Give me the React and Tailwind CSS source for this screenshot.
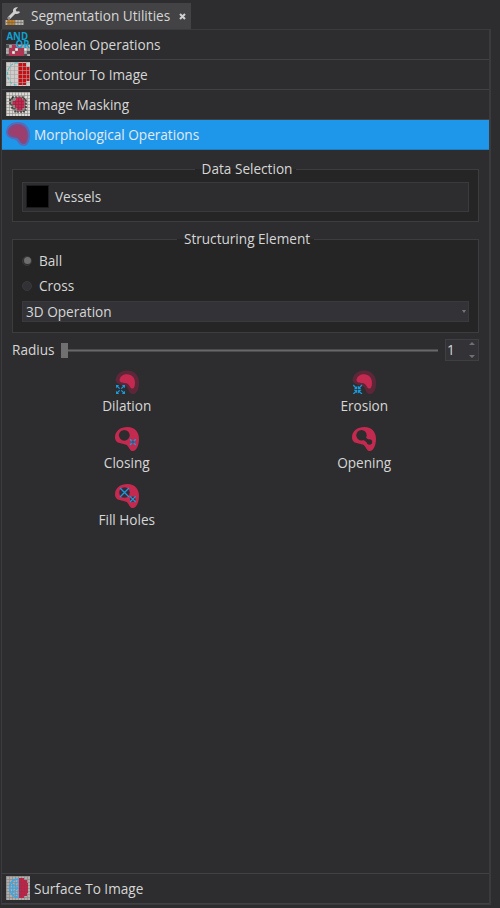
import React from "react";

const RED = "#c4294f";
const BLUE = "#1a9bdc";

function Grid({ color = "#777", step = 3, width = 0.6 }) {
  const lines = [];
  for (let i = 0; i <= 24; i += step) lines.push(`M${i + 0.5} 0V24M0 ${i + 0.5}H24`);
  return <path d={lines.join("")} stroke={color} strokeWidth={width} fill="none" />;
}

function Icon({ children, className = "" }) {
  return (
    <svg viewBox="0 0 24 24" className={`h-6 w-6 shrink-0 ${className}`}>
      {children}
    </svg>
  );
}

function WrenchIcon() {
  return (
    <svg viewBox="0 0 19 19" className="h-[19px] w-[19px] shrink-0">
      <path d="M0.500 13h18v5H0.500z" fill="#b9b6b0" />
      <path d="M2 13h8v5H2z" fill="#c8801f" />
      <path d="M4 13v5M7 13v5M10 13v5M13 13v5M16 13v5M1 15.500h17" stroke="#66625c" strokeWidth="0.600" />
      <path d="M4 11L9.500 5.500" stroke="#cfcfcf" strokeWidth="3" strokeLinecap="round" />
      <path d="M13 0.300C10 -0.300 7.600 1.500 8 4.300C8.300 7 11.500 8 14.800 5.700L14.300 4.300L11.500 4.500L10.700 2.700Z" fill="#cfcfcf" />
      <circle cx="4" cy="11" r="0.800" fill="#444" />
    </svg>
  );
}

function BooleanIcon() {
  return (
    <svg viewBox="0 0 24 26" className="-mt-[2px] h-[26px] w-6 shrink-0 overflow-visible">
      <path d="M0 13.500h24v11.500H0z" fill="#b4b2b2" />
      <path d="M3 17h3v-3h6v3h6v8H3z" fill={RED} />
      <path d="M9 17h3v3H9zM6 20h3v3H6zM18 17h3v3h-3z" fill="#eee" />
      <path d="M0 14h3v3H0zM21 20h3v3h-3zM0 23h3v2H0zM18 23h3v2h-3z" fill="#4b4b4d" />
      <path d="M3 14v11M6 14v11M9 14v11M12 14v11M15 14v11M18 14v11M21 14v11M0 17h24M0 20h24M0 23h24" stroke="#666" strokeWidth="0.400" />
      <text x="0.500" y="8.500" fontFamily="Open Sans, sans-serif" fontWeight="700" fontSize="10.500" fill="#11a1cf" textLength="21.500" lengthAdjust="spacingAndGlyphs">AND</text>
      <text x="9.500" y="17" fontFamily="Open Sans, sans-serif" fontWeight="700" fontSize="10.500" fill="#11a1cf" textLength="14" lengthAdjust="spacingAndGlyphs">OR</text>
    </svg>
  );
}

function ContourIcon() {
  return (
    <Icon className="-mt-px">
      <path d="M0 0h24v24H0z" fill="#cfcdca" />
      <path d="M12 1h8v4h3.500v14H20v4h-8z" fill="#c90d12" />
      <Grid color="#aaa5a3" step={4} />
      <path d="M12 1C-2 0-2 24 12 23" fill="none" stroke="#35bdc8" strokeWidth="1" strokeDasharray="3 2" />
    </Icon>
  );
}

function MaskIcon() {
  return (
    <Icon className="-mt-px">
      <path d="M0 0h24v24H0z" fill="#dad8d4" />
      <Grid color="#8b8985" />
      <path d="M6 5h12v2h2v11h-2v2H9v-3H6v-4H4V7h2z" fill="#8a8886" stroke="#151515" strokeWidth="1.200" strokeDasharray="2 1.300" />
      <path d="M10 5.500h6v2h2.500v8.500h-2v2.500h-5.500v-3H9v-2.500H6.500V9H10z" fill={RED} />
      <path d="M9.500 8v7M12.500 6v12M15.500 6v12M7 9.500h11M7 12.500h11M9 15.500h9" stroke="#8d2140" strokeWidth="0.500" />
    </Icon>
  );
}

function MorphIcon() {
  return (
    <Icon className="-mt-px">
      <path d="M0 10C0.500 3 6 0 12 0C20 0 24 6 24 13C24 19 22 24 18 24C14 24 12 21 11 19C9 16.500 7 18 4 16C1 15 0 13 0 10Z" fill="#7255a0" opacity="0.650" />
      <path d="M1.500 10C2.500 4.500 7 2 12 2C18.500 2 22 7 22 13C22 18 20.500 22 18 22C14 22 14 18 11 16C8 15 2.500 16 1.500 10Z" fill="#85487f" />
      <path d="M4 9.500C5 6 8 4 12 4C17 4 20 8 20 13C20 17 19 20 17.500 20C15 19.500 14.500 16.500 12 14.500C9 13 4.500 14 4 9.500Z" fill="#9e3e6c" />
    </Icon>
  );
}

function SurfaceIcon() {
  return (
    <Icon className="-mt-px">
      <path d="M0 0h24v24H0z" fill="#b0aeac" />
      <Grid color="#858381" />
      <path d="M13 2h5v2h3v3h1v10h-1v3h-3v2h-5z" fill="#bf2449" />
      <path d="M15.500 2v20M18.500 4v16M13 6.500h8M13 9.500h9M13 12.500h9M13 15.500h9M13 18.500h8" stroke="#93324b" strokeWidth="0.500" />
      <path d="M12 3C1 3 1 21 12 21" stroke="#36a9ec" strokeWidth="1.500" fill="none" />
      <path d="M12 3V21M12 6L7 9L12 12L7 16L12 19M4 12H12M5 7L7 9V16L5 18" stroke="#36a9ec" strokeWidth="1" fill="none" />
    </Icon>
  );
}

function Halo() {
  return (
    <>
      <path d="M0.500 10C1.500 4 6 0.500 12 0.500C20 0.500 24 6 24 13C24 19 22 24 18 24C14 24 14 20 12 17C9 14 2 16 0.500 10Z" fill="#5e2739" />
      <path d="M4.500 10C5 6 8.500 4.200 12 4.200C17 4.200 20 8 20 13C20 16.500 19 18.500 17.500 18.500C15 18.500 15 15.500 12.500 13.700C10 12.500 5 14 4.500 10Z" fill={RED} />
    </>
  );
}

function DilationIcon() {
  return (
    <Icon>
      <Halo />
      <path d="M1 15H4.200L1 18.200ZM10 15V18.200L6.800 15ZM1 24V20.800L4.200 24ZM10 24H6.800L10 20.800Z" fill={BLUE} />
      <path d="M2 16L4.700 18.700M9 16L6.300 18.700M2 23L4.700 20.300M9 23L6.300 20.300" stroke={BLUE} strokeWidth="1.200" />
    </Icon>
  );
}

function ErosionIcon() {
  return (
    <Icon>
      <Halo />
      <path d="M5.300 15.800V19.300H1.800ZM6 15.800L9.500 19.300H6ZM5.300 23.500V20H1.800ZM6 23.500L9.500 20H6Z" fill={BLUE} />
      <path d="M1.300 15L4 18M10 15L7 18M1.300 24L4 21.500M10 24L7 21.500" stroke={BLUE} strokeWidth="1.200" />
    </Icon>
  );
}

function Body() {
  return (
    <path d="M0 10C0 4 5.500 0 12.500 0C20 0 24 5 24 12C24 18 21.500 24 18 24C14.500 24 14.500 20.500 12 18.200C8.500 15.500 0 18 0 10Z" fill={RED} />
  );
}

function ClosingIcon() {
  return (
    <Icon>
      <Body />
      <circle cx="9.300" cy="8.300" r="5.400" fill="#2d2d2f" />
      <path d="M15 12.200L20.800 18M20.800 12.200L15 18" stroke={BLUE} strokeWidth="1.400" />
      <circle cx="17.900" cy="15.100" r="1.500" fill="#2b5c8a" />
    </Icon>
  );
}

function OpeningIcon() {
  return (
    <Icon>
      <Body />
      <circle cx="9.500" cy="8.200" r="5.200" fill="#2d2d2f" />
      <circle cx="17.500" cy="15" r="2.700" fill="#2d2d2f" />
      <path d="M13 10L17 13L15.500 16L11 12.500Z" fill="#2d2d2f" />
    </Icon>
  );
}

function FillIcon() {
  return (
    <Icon>
      <Body />
      <circle cx="9.500" cy="8.500" r="5.300" fill="#392b3c" />
      <circle cx="17.800" cy="15.200" r="2.600" fill="#392b3c" />
      <path d="M5 4L14 13M14 4L5 13M15 12.400L20.600 18M20.600 12.400L15 18" stroke={BLUE} strokeWidth="1.300" />
    </Icon>
  );
}

function Section({ icon, label, active = false }) {
  return (
    <div
      className={
        active
          ? "flex h-[30px] items-center gap-1 border-b border-[#1b7fc4] bg-[#1e97ea] pl-1 text-[#e2eaf2]"
          : "flex h-[30px] items-center gap-1 border-b border-[#414144] bg-[#2d2d2f] pl-1"
      }
    >
      {icon}
      <span>{label}</span>
    </div>
  );
}

function Group({ title, className, children }) {
  return (
    <fieldset className={`mx-[10px] min-w-0 border border-[#3d3d40] px-[9px] ${className}`}>
      <legend className="mx-auto h-[18px] pr-[4px] pl-[7px] leading-[18px]">{title}</legend>
      {children}
    </fieldset>
  );
}

function Radio({ label, checked }) {
  return (
    <div className="flex h-[25px] items-center gap-[7px]">
      <span className="flex h-[10px] w-[10px] items-center justify-center rounded-full border border-[#39393c] bg-[#313136]">
        {checked && <span className="h-[7px] w-[7px] shrink-0 rounded-full bg-[#6e6e6e]" />}
      </span>
      <span>{label}</span>
    </div>
  );
}

function Tool({ icon, label }) {
  return (
    <div className="flex h-[57px] flex-col items-center">
      {icon}
      <span className="mt-[3px] leading-[18px]">{label}</span>
    </div>
  );
}

export default function App() {
  return (
    <div className="flex h-[908px] w-[500px] flex-col overflow-hidden bg-[#2d2d2f] pt-[3px] pl-px font-['Open_Sans',sans-serif] text-[13.6px] leading-[18px] whitespace-nowrap text-[#d6d6d6]">
      <div className="ml-px flex h-[26px] w-[189px] items-center bg-[#434345] pl-[3px]">
        <WrenchIcon />
        <span className="ml-[7px] w-[141px]">Segmentation Utilities</span>
        <svg viewBox="0 0 7 7" className="mt-px ml-[7px] h-[7px] w-[7px] shrink-0">
          <path d="M1 1L6 6M6 1L1 6" stroke="#d0d0d0" strokeWidth="2" />
        </svg>
      </div>

      <div className="flex h-[876px] w-[490px] flex-col border border-r-2 border-[#3b3b3e]">
        <Section icon={<BooleanIcon />} label="Boolean Operations" />
        <Section icon={<ContourIcon />} label="Contour To Image" />
        <Section icon={<MaskIcon />} label="Image Masking" />
        <Section icon={<MorphIcon />} label="Morphological Operations" active />

        <div className="flex min-h-0 flex-1 flex-col pt-[10px]">
          <Group title="Data Selection" className="h-[62px] bg-[#252525]">
            <div className="mt-[4px] flex h-[30px] items-center gap-[6px] border border-[#3a3a3e] bg-[#2d2d2f] pl-[3px]">
              <span className="-mt-px h-[23px] w-[23px] border border-[#1c1c1c] bg-black" />
              <span>Vessels</span>
            </div>
          </Group>

          <Group title="Structuring Element" className="mt-[8px] h-[103px] bg-[#252525]">
            <Radio label="Ball" checked />
            <Radio label="Cross" />
            <div className="mt-[3px] flex h-[21px] items-center justify-between border border-[#3a3a3e] bg-[#333337] pr-[2px] pl-[3px]">
              <span>3D Operation</span>
              <svg viewBox="0 0 4 3" className="h-[3px] w-1">
                <path d="M0 0h4L2 3Z" fill="#777" />
              </svg>
            </div>
          </Group>

          <div className="mx-[10px] mt-[6px] flex h-[22px] items-center">
            <span className="w-[49px]">Radius</span>
            <span className="h-[15px] w-[7px] bg-[#707070]" />
            <span className="h-[3px] w-[370px] border-y border-[#4c4c4e] bg-[#686868]" />
            <div className="ml-[7px] flex h-[22px] w-[34px] items-center justify-between border border-[#3f3f43] bg-[#333337] pr-[3px] pl-px">
              <span>1</span>
              <svg viewBox="0 0 6 16" className="h-4 w-[6px]">
                <path d="M0 3L3 0L6 3ZM0 13h6L3 16Z" fill="#707070" />
              </svg>
            </div>
          </div>

          <div className="mx-[6px] mt-[9px] grid grid-cols-2">
            <Tool icon={<DilationIcon />} label="Dilation" />
            <Tool icon={<ErosionIcon />} label="Erosion" />
            <Tool icon={<ClosingIcon />} label="Closing" />
            <Tool icon={<OpeningIcon />} label="Opening" />
            <Tool icon={<FillIcon />} label="Fill Holes" />
          </div>
        </div>

        <div className="border-t border-[#414144]">
          <Section icon={<SurfaceIcon />} label="Surface To Image" />
        </div>
      </div>
    </div>
  );
}
